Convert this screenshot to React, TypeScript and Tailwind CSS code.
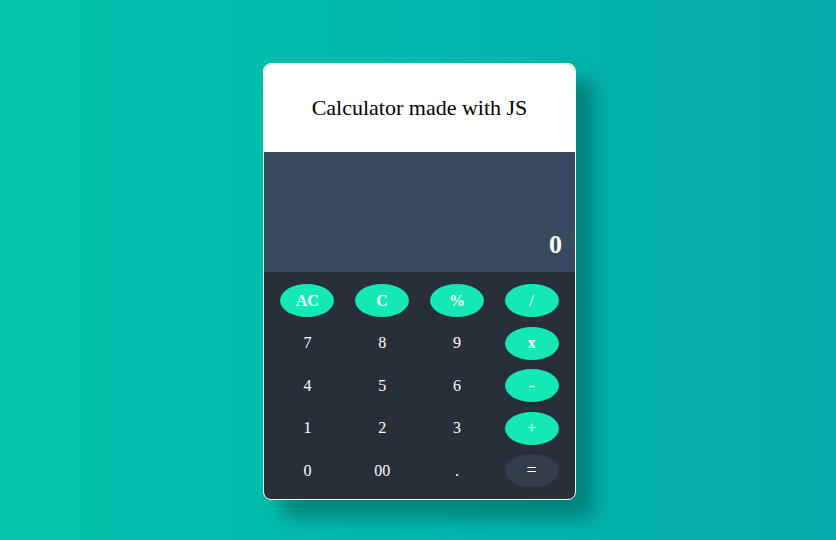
import React from 'react';

type Key = { label: string; kind: 'fn' | 'num' | 'eq'; bold?: boolean };

const keys: Key[] = [
  { label: 'AC', kind: 'fn', bold: true },
  { label: 'C', kind: 'fn', bold: true },
  { label: '%', kind: 'fn', bold: true },
  { label: '/', kind: 'fn' },
  { label: '7', kind: 'num' },
  { label: '8', kind: 'num' },
  { label: '9', kind: 'num' },
  { label: 'x', kind: 'fn', bold: true },
  { label: '4', kind: 'num' },
  { label: '5', kind: 'num' },
  { label: '6', kind: 'num' },
  { label: '-', kind: 'fn' },
  { label: '1', kind: 'num' },
  { label: '2', kind: 'num' },
  { label: '3', kind: 'num' },
  { label: '+', kind: 'fn' },
  { label: '0', kind: 'num' },
  { label: '00', kind: 'num' },
  { label: '.', kind: 'num' },
  { label: '=', kind: 'eq' },
];

export default function App() {
  return (
    <div className="min-h-screen w-full bg-gradient-to-r from-[#03c5ad] to-[#03aaa9] flex justify-center items-start pt-[63px] pl-[3px] font-['Liberation_Serif','Times_New_Roman',serif]">
      <div className="w-[313px] rounded-lg border border-white overflow-hidden shadow-[18px_18px_18px_rgba(0,40,40,0.35)] bg-[#282f38]">
        {/* header */}
        <div className="h-[88px] bg-white flex items-center justify-center">
          <h1 className="text-[22px] text-black pb-[1px]">Calculator made with JS</h1>
        </div>

        {/* display */}
        <div className="h-[120px] bg-[#374a5f] flex items-end justify-end pr-[13px] pb-[14px]">
          <span className="text-[26px] font-bold text-white leading-none">0</span>
        </div>

        {/* keypad */}
        <div className="grid grid-cols-4 gap-y-[9.5px] px-[6px] pt-[12px] pb-[12px]">
          {keys.map((k) => (
            <div key={k.label} className="h-[33px] flex items-center justify-center">
              {k.kind === 'num' ? (
                <button className="w-[54px] h-[33px] text-white text-[16px]">{k.label}</button>
              ) : (
                <button
                  className={
                    k.kind === 'eq'
                      ? 'w-[54px] h-[33px] rounded-[50%] bg-[#333d4c] text-white text-[18px]'
                      : k.bold
                      ? 'w-[54px] h-[33px] rounded-[50%] bg-[#14e9b5] text-white text-[16px] font-bold'
                      : 'w-[54px] h-[33px] rounded-[50%] bg-[#14e9b5] text-white text-[17px]'
                  }
                >
                  {k.label}
                </button>
              )}
            </div>
          ))}
        </div>
      </div>
    </div>
  );
}
